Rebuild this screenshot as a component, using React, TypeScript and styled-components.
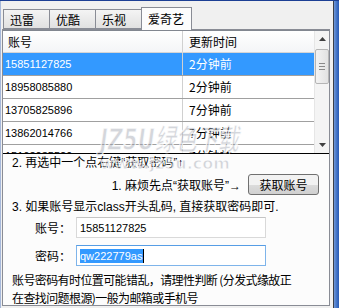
import styled, { createGlobalStyle } from "styled-components";

const GlobalStyle = createGlobalStyle`
  body {
    margin: 0;
    font-family: "Liberation Sans", "Noto Sans CJK SC", sans-serif;
    font-size: 12px;
    color: #000;
  }
`;

const Window = styled.div`
  width: 339px;
  height: 308px;
  display: flex;
  border-top: 1px solid #1c3f94;
  box-sizing: border-box;
  overflow: hidden;
`;

const Main = styled.div`
  width: 333px;
  background: #f0f0f0;
  border-left: 1px solid #a6b8da;
  padding: 5px 0 0 1px;
  box-sizing: border-box;
  display: flex;
  flex-direction: column;
`;

const Edge = styled.div`
  width: 1px;
  background: #3b3f48;
`;

const BlueStrip = styled.div`
  flex: 1;
  background: linear-gradient(90deg, #6f97d6, #3d6fc4 60%, #2a5bb5);
`;

const TabBar = styled.div`
  display: flex;
  align-items: flex-end;
  height: 23px;
  padding-left: 1px;
  position: relative;
  z-index: 1;
`;

const Tab = styled.div<{ $active?: boolean }>`
  box-sizing: border-box;
  width: ${(p) => (p.$active ? 51 : 47)}px;
  height: ${(p) => (p.$active ? 23 : 20)}px;
  padding-left: 6px;
  margin-bottom: ${(p) => (p.$active ? -1 : 0)}px;
  margin-left: -1px;
  border: 1px solid #898c95;
  border-bottom: ${(p) => (p.$active ? "none" : "1px solid #898c95")};
  background: ${(p) =>
    p.$active ? "#fcfcfc" : "linear-gradient(#f4f4f4, #e1e1e1)"};
  font-family: "Noto Sans CJK SC", sans-serif;
  line-height: ${(p) => (p.$active ? 22 : 19)}px;
  &:first-child {
    margin-left: 0;
  }
`;

const Panel = styled.div`
  width: 328px;
  height: 277px;
  box-sizing: border-box;
  border: 1px solid #898c95;
  background: #fcfcfc;
  overflow: hidden;
  display: flex;
  flex-direction: column;
`;

const List = styled.div`
  height: 124px;
  box-sizing: border-box;
  border-top: 1px solid #828790;
  border-bottom: 1px solid #000;
  display: flex;
  background: #fff;
`;

const Rows = styled.div`
  flex: 1;
  overflow: hidden;
`;

const HeaderRow = styled.div`
  display: flex;
  height: 22px;
  box-sizing: border-box;
  background: linear-gradient(#ffffff, #f4f5f7);
  border-bottom: 1px solid #d5d5d5;
  font-family: "Noto Sans CJK SC", sans-serif;
  line-height: 21px;
`;

const Row = styled.div<{ $selected?: boolean }>`
  display: flex;
  height: 23px;
  box-sizing: border-box;
  border-bottom: 1px solid #a0a0a0;
  background: ${(p) => (p.$selected ? "#3399ff" : "#fff")};
  color: ${(p) => (p.$selected ? "#fff" : "#000")};
  line-height: 22px;
`;

const Cell = styled.div<{ $first?: boolean; $pad: number }>`
  width: ${(p) => (p.$first ? "180px" : "auto")};
  flex: ${(p) => (p.$first ? "none" : "1")};
  padding-left: ${(p) => p.$pad}px;
  box-sizing: border-box;
  border-right: ${(p) => (p.$first ? "1px solid #d0d0d0" : "none")};
  white-space: nowrap;
`;

const Num = styled.span`
  font-family: "Liberation Sans", sans-serif;
  font-size: 11px;
`;

const Ago = styled.span`
  font-family: "Noto Sans CJK SC", sans-serif;
`;

const ScrollBar = styled.div`
  width: 14px;
  display: flex;
  flex-direction: column;
  background: #f4f4f4;
  border-left: 1px solid #e6e6e6;
`;

const ArrowBox = styled.div`
  height: 16px;
  display: flex;
  align-items: center;
  justify-content: center;
`;

const Thumb = styled.div`
  height: 35px;
  margin-top: 2px;
  box-sizing: border-box;
  border: 1px solid #b5b5b5;
  border-radius: 2px;
  background: linear-gradient(90deg, #f3f3f3, #e2e2e2);
  display: flex;
  flex-direction: column;
  align-items: center;
  justify-content: center;
  gap: 2px;
`;

const Grip = styled.div`
  width: 6px;
  height: 1px;
  background: #8a8a8a;
`;

const Track = styled.div`
  flex: 1;
`;

const Body = styled.div`
  padding: 1px 10px 0 9px;
  display: flex;
  flex-direction: column;
  font-family: "Liberation Sans", "Noto Sans CJK SC", sans-serif;
`;

const Line = styled.div<{ $top?: number }>`
  line-height: 16px;
  margin-top: ${(p) => p.$top ?? 0}px;
  white-space: nowrap;
`;

const ActionRow = styled.div`
  display: flex;
  justify-content: flex-end;
  align-items: center;
  gap: 7px;
  margin-top: 3px;
`;

const Button = styled.div`
  width: 71px;
  height: 21px;
  box-sizing: border-box;
  border: 1px solid #707070;
  border-radius: 3px;
  background: linear-gradient(#f2f2f2 50%, #dcdcdc 50%, #d0d0d0);
  display: flex;
  align-items: center;
  justify-content: center;
  font-family: "Noto Sans CJK SC", sans-serif;
`;

const FieldRow = styled.div<{ $top: number }>`
  display: flex;
  align-items: center;
  margin-top: ${(p) => p.$top}px;
`;

const Label = styled.div`
  width: 64px;
  padding-left: 23px;
  box-sizing: border-box;
  font-family: "Noto Sans CJK SC", sans-serif;
`;

const Field = styled.div<{ $focused?: boolean }>`
  width: 190px;
  height: 21px;
  box-sizing: border-box;
  border: 1px solid ${(p) => (p.$focused ? "#7eb4ea" : "#d9d9d9")};
  border-top-color: ${(p) => (p.$focused ? "#569de5" : "#c4c4c4")};
  background: #fff;
  padding-left: 3px;
  display: flex;
  align-items: center;
  font-family: "Liberation Sans", sans-serif;
  font-size: 11px;
`;

const Selected = styled.span`
  background: #3399ff;
  color: #fff;
  padding: 1px 1px 1px 0;
  border-right: 1px solid #000;
`;

const Para = styled.div`
  margin-top: 5px;
  line-height: 18px;
  font-family: "Noto Sans CJK SC", sans-serif;
  letter-spacing: -0.6px;
  white-space: nowrap;
`;

const Watermark = styled.div`
  position: absolute;
  left: 100px;
  top: 126px;
  pointer-events: none;
  color: rgba(150, 155, 168, 0.42);
  -webkit-text-stroke: 1px rgba(255, 255, 255, 0.85);
  font-family: "DejaVu Sans", "Noto Sans CJK SC", sans-serif;
  font-weight: bold;
  line-height: 1;
`;

const MarkBig = styled.div`
  font-size: 21px;
  font-style: italic;
  transform: scaleY(1.4);
  transform-origin: top left;
  white-space: nowrap;
`;

const MarkSmall = styled.div`
  font-size: 16px;
  margin-top: 9px;
  white-space: nowrap;
`;

const rows = [
  { num: "15851127825", ago: "2分钟前" },
  { num: "18958085880", ago: "2分钟前" },
  { num: "13705825896", ago: "7分钟前" },
  { num: "13862014766", ago: "7分钟前" },
  { num: "15162035529", ago: "7分钟前" },
];

const tabs = ["迅雷", "优酷", "乐视", "爱奇艺"];

export default function App() {
  return (
    <>
      <GlobalStyle />
      <Window>
        <Main>
          <TabBar>
            {tabs.map((t, i) => (
              <Tab key={t} $active={i === 3}>
                {t}
              </Tab>
            ))}
          </TabBar>
          <Panel>
            <List>
              <Rows>
                <HeaderRow>
                  <Cell $first $pad={5}>账号</Cell>
                  <Cell $pad={6}>更新时间</Cell>
                </HeaderRow>
                {rows.map((r, i) => (
                  <Row key={r.num} $selected={i === 0}>
                    <Cell $first $pad={2}>
                      <Num>{r.num}</Num>
                    </Cell>
                    <Cell $pad={6}>
                      <Ago>{r.ago}</Ago>
                    </Cell>
                  </Row>
                ))}
              </Rows>
              <ScrollBar>
                <ArrowBox>
                  <svg width="7" height="4" viewBox="0 0 7 4">
                    <path d="M0 4 L3.5 0 L7 4 Z" fill="#404040" />
                  </svg>
                </ArrowBox>
                <Thumb>
                  <Grip />
                  <Grip />
                  <Grip />
                </Thumb>
                <Track />
                <ArrowBox>
                  <svg width="7" height="4" viewBox="0 0 7 4">
                    <path d="M0 0 L7 0 L3.5 4 Z" fill="#404040" />
                  </svg>
                </ArrowBox>
              </ScrollBar>
            </List>
            <Body>
              <Line>2. 再选中一个点右键“获取密码”↑</Line>
              <ActionRow>
                <span>1. 麻烦先点“获取账号”→</span>
                <Button>获取账号</Button>
              </ActionRow>
              <Line $top={4}>3. 如果账号显示class开头乱码, 直接获取密码即可.</Line>
              <FieldRow $top={2}>
                <Label>账号：</Label>
                <Field>15851127825</Field>
              </FieldRow>
              <FieldRow $top={7}>
                <Label>密码：</Label>
                <Field $focused>
                  <Selected>qw222779as</Selected>
                </Field>
              </FieldRow>
              <Para>
                账号密码有时位置可能错乱，请理性判断 (分发式缘故正
                <br />
                在查找问题根源)一般为邮箱或手机号
              </Para>
            </Body>
          </Panel>
        </Main>
        <Edge />
        <BlueStrip />
      </Window>
      <Watermark>
        <MarkBig>JZ5U绿色下载</MarkBig>
        <MarkSmall>www.jz5u.com</MarkSmall>
      </Watermark>
    </>
  );
}
